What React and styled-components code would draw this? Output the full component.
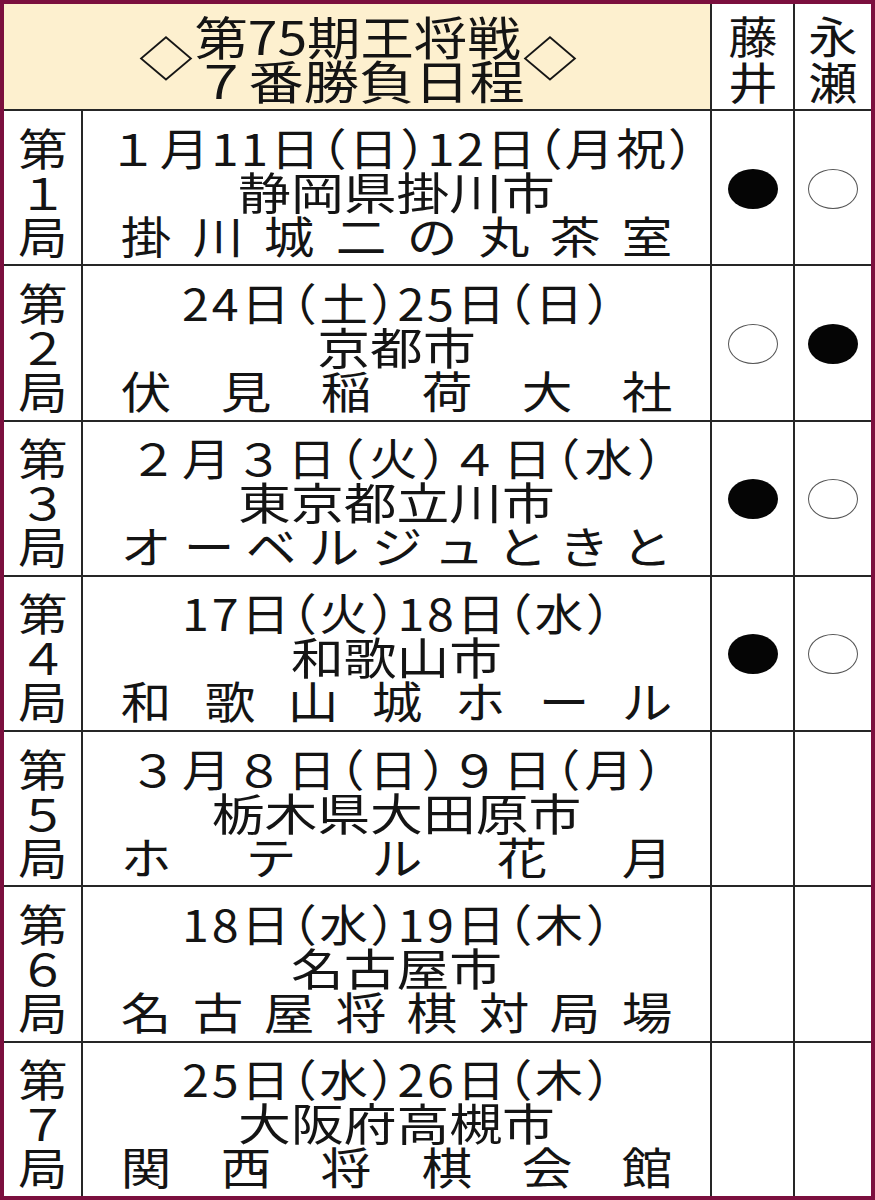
import React from "react";
import styled, { createGlobalStyle } from "styled-components";

const GlobalStyle = createGlobalStyle`
  html, body {
    margin: 0;
    padding: 0;
    background: #fff;
  }
  body {
    font-family: "Noto Sans CJK JP", "Noto Sans", sans-serif;
    color: #141414;
  }
`;

const Board = styled.div`
  width: 875px;
  height: 1200px;
  box-sizing: border-box;
  border: 4px solid #7b0f3e;
  display: grid;
  grid-template-columns: 77px 627px 81px 76px;
  grid-template-rows: 105px repeat(7, 1fr);
  gap: 2px;
  background: #262626;
`;

const Cell = styled.div`
  background: #fff;
  display: flex;
  flex-direction: column;
  align-items: center;
  justify-content: center;
  min-width: 0;
  overflow: visible;
`;

// header over the round + schedule columns
const TitleCell = styled(Cell)`
  grid-column: 1 / 3;
  flex-direction: row;
  background: #fdf0cf;
  padding-left: 2px;
`;

const Diamond = styled.span`
  font-size: 54px;
  line-height: 1;
  display: inline-block;
  transform: scaleY(0.85);
  margin-top: -4px;
`;

const TitleBlock = styled.div`
  width: 330px;
  display: flex;
  flex-direction: column;
  align-items: center;
`;

const TitleLine = styled.span`
  display: block;
  font-size: 46px;
  line-height: 44px;
  white-space: nowrap;
  transform: scaleX(${p => p.$sx || 1.15});
  margin-left: ${p => p.$shift || 0}px;
`;

const NameCell = styled(Cell)`
  padding-top: 2px;
`;

const StackChar = styled.span`
  display: block;
  font-size: 44px;
  line-height: ${p => p.$lh || 44}px;
  transform: scaleX(1.12);
`;

const RoundCell = styled(Cell)`
  padding-top: 6px;
`;

const InfoCell = styled(Cell)`
  padding-top: 6px;
`;

// half-width brackets as in the newspaper setting
const DateLine = styled.span`
  display: block;
  width: 100%;
  text-align: center;
  font-size: 44px;
  line-height: 44px;
  white-space: nowrap;
  font-feature-settings: "halt";
  letter-spacing: ${p => p.$ls || 0}px;
  transform: scaleX(${p => p.$sx || 1.06});
  margin-left: ${p => p.$shift || 0}px;
`;

const CityLine = styled.span`
  display: block;
  width: 100%;
  text-align: center;
  font-size: 44px;
  line-height: 44px;
  white-space: nowrap;
  transform: scaleX(1.2);
`;

// venue names are spread over the full line
const VenueLine = styled.div`
  width: 545px;
  display: flex;
  justify-content: space-between;
  font-size: 44px;
  line-height: 44px;
`;

const VenueChar = styled.span`
  display: inline-block;
  transform: scaleX(1.15);
`;

const MarkCell = styled(Cell)`
  padding-top: 2px;
`;

const Mark = styled.span`
  width: 50px;
  height: 40px;
  border-radius: 50%;
  box-sizing: border-box;
  background: ${p => (p.$filled ? "#050505" : "#fff")};
  border: ${p => (p.$filled ? "none" : "1.5px solid #555")};
`;

const twoDay = { sx: 1.1, ls: 2.5, shift: 2 };
const monthDay = { sx: 1.1, ls: 4, shift: 2 };

const rounds = [
  { no: "１", date: "１月11日（日）12日（月祝）", city: "静岡県掛川市", venue: "掛川城二の丸茶室", fujii: "win", nagase: "loss", sx: 1.12, ls: 2, shift: 10 },
  { no: "２", date: "24日（土）25日（日）", city: "京都市", venue: "伏見稲荷大社", fujii: "loss", nagase: "win", ...twoDay },
  { no: "３", date: "２月３日（火）４日（水）", city: "東京都立川市", venue: "オーベルジュときと", fujii: "win", nagase: "loss", ...monthDay },
  { no: "４", date: "17日（火）18日（水）", city: "和歌山市", venue: "和歌山城ホール", fujii: "win", nagase: "loss", ...twoDay },
  { no: "５", date: "３月８日（日）９日（月）", city: "栃木県大田原市", venue: "ホテル花月", ...monthDay },
  { no: "６", date: "18日（水）19日（木）", city: "名古屋市", venue: "名古屋将棋対局場", ...twoDay },
  { no: "７", date: "25日（水）26日（木）", city: "大阪府高槻市", venue: "関西将棋会館", ...twoDay }
];

function Result({ value }) {
  return <MarkCell>{value && <Mark $filled={value === "win"} />}</MarkCell>;
}

function RoundRow({ round }) {
  return (
    <>
      <RoundCell>
        <StackChar>第</StackChar>
        <StackChar>{round.no}</StackChar>
        <StackChar>局</StackChar>
      </RoundCell>
      <InfoCell>
        <DateLine $sx={round.sx} $ls={round.ls} $shift={round.shift}>
          {round.date}
        </DateLine>
        <CityLine>{round.city}</CityLine>
        <VenueLine>
          {round.venue.split("").map((ch, i) => (
            <VenueChar key={i}>{ch}</VenueChar>
          ))}
        </VenueLine>
      </InfoCell>
      <Result value={round.fujii} />
      <Result value={round.nagase} />
    </>
  );
}

export default function App() {
  return (
    <>
      <GlobalStyle />
      <Board>
        <TitleCell>
          <Diamond>◇</Diamond>
          <TitleBlock>
            <TitleLine $sx={1.16}>第75期王将戦</TitleLine>
            <TitleLine $sx={1.2} $shift={2}>７番勝負日程</TitleLine>
          </TitleBlock>
          <Diamond>◇</Diamond>
        </TitleCell>
        <NameCell>
          <StackChar $lh={46}>藤</StackChar>
          <StackChar $lh={46}>井</StackChar>
        </NameCell>
        <NameCell>
          <StackChar $lh={46}>永</StackChar>
          <StackChar $lh={46}>瀬</StackChar>
        </NameCell>
        {rounds.map(r => (
          <RoundRow key={r.no} round={r} />
        ))}
      </Board>
    </>
  );
}
